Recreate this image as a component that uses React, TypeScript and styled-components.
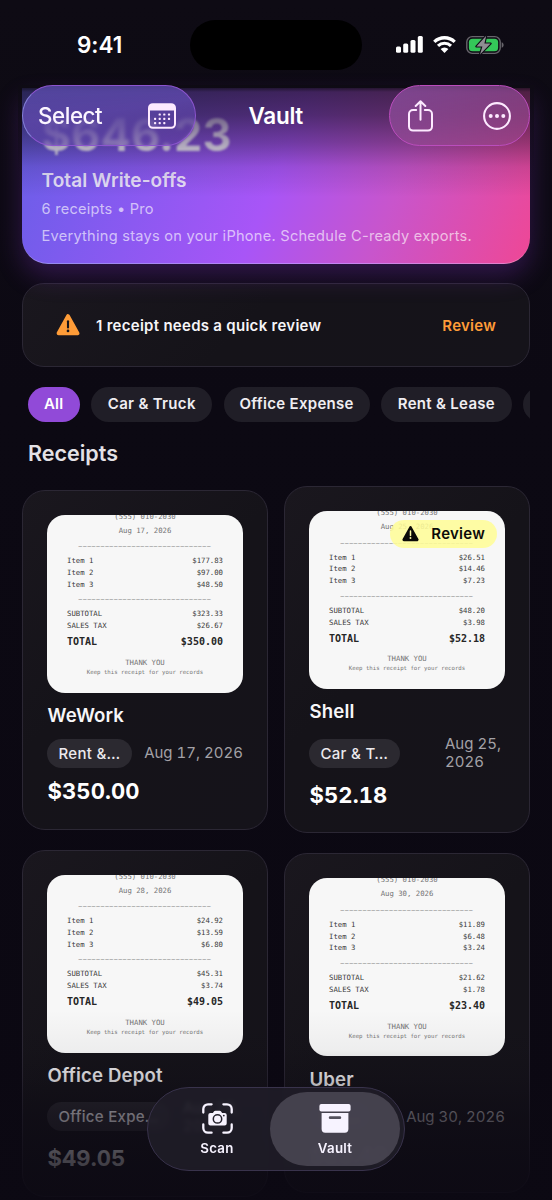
import React from "react";
import styled, { createGlobalStyle, css } from "styled-components";

const GlobalStyle = createGlobalStyle`
  * { box-sizing: border-box; }
  html, body { margin: 0; padding: 0; background: #0c0913; }
  body { font-family: Inter, "Liberation Sans", sans-serif; color: #fff; -webkit-font-smoothing: antialiased; }
`;

const Screen = styled.div`
  position: relative;
  width: 552px;
  height: 1200px;
  overflow: hidden;
  background: linear-gradient(180deg, #0e0b14 0, #0c0913 400px, #0b0812 100%);
`;

const StatusBar = styled.header`
  display: flex;
  align-items: center;
  height: 88px;
  padding: 1px 48px 0 77px;
`;

const Clock = styled.div`
  width: 113px;
  font-size: 22.5px;
  font-weight: 600;
  letter-spacing: -0.05px;
`;

const Island = styled.div`
  width: 172px;
  height: 50px;
  border-radius: 25px;
  background: #000;
`;

const StatusIcons = styled.div`
  display: flex;
  flex: 1;
  justify-content: flex-end;
  align-items: center;
  gap: 10px;
`;

const Content = styled.main`
  display: flex;
  flex-direction: column;
  padding: 0 22px;
`;

const Hero = styled.section`
  position: relative;
  display: flex;
  flex-direction: column;
  height: 176px;
  padding: 20px 19.5px 0;
  border-radius: 0 0 26px 26px;
  border-bottom: 1px solid rgba(255, 255, 255, 0.28);
  background: linear-gradient(112deg, #665fe6 0%, #7d5bee 18%, #a855f7 50%, #c855cc 72%, #ec4899 98%);
  box-shadow: 0 12px 26px rgba(125, 50, 190, 0.32);
`;

const Amount = styled.div`
  position: relative;
  z-index: 1;
  width: 220px;
  height: 54px;
  font-size: 45px;
  line-height: 54px;
  font-weight: 700;
  letter-spacing: 0.1px;
  color: transparent;
  background: linear-gradient(180deg, rgba(140, 132, 150, 0.7) 20%, rgba(190, 186, 196, 0.95) 78%);
  background-clip: text;
  -webkit-background-clip: text;
  filter: blur(1.3px);
`;

const TopShade = styled.div`
  position: absolute;
  left: -4px;
  right: -4px;
  top: -3px;
  height: 112px;
  background: linear-gradient(
    180deg,
    rgba(14, 11, 20, 1) 0,
    rgba(14, 11, 20, 0.68) 7px,
    rgba(14, 11, 20, 0.58) 30px,
    rgba(14, 11, 20, 0.36) 58px,
    rgba(14, 11, 20, 0.12) 82px,
    rgba(14, 11, 20, 0) 100%
  );
`;

const HeroTitle = styled.div`
  margin-top: 6px;
  font-size: 19px;
  line-height: 25px;
  font-weight: 600;
  letter-spacing: 0.08px;
  color: rgba(255, 255, 255, 0.84);
`;

const HeroLine = styled.div<{ $top: number }>`
  margin-top: ${(p) => p.$top}px;
  font-size: 14.6px;
  line-height: 20px;
  letter-spacing: 0.25px;
  color: rgba(255, 255, 255, 0.64);
  white-space: nowrap;
`;

const surface = css`
  border: 1px solid #2b2734;
  background: linear-gradient(135deg, #1a171e 0%, #151319 45%, #15131a 100%);
`;

const Banner = styled.section`
  ${surface}
  display: flex;
  align-items: center;
  height: 84px;
  margin-top: 19px;
  padding: 0 33px;
  border-radius: 22px;
`;

const BannerText = styled.div`
  flex: 1;
  margin-left: 16px;
  font-size: 15px;
  font-weight: 600;
  letter-spacing: 0.28px;
  color: #f6f5f8;
`;

const BannerAction = styled.div`
  font-size: 15px;
  font-weight: 600;
  letter-spacing: 0.25px;
  color: #ff9c38;
`;

const Chips = styled.nav`
  display: flex;
  gap: 11.3px;
  margin-top: 19.5px;
  padding-left: 5.5px;
  overflow: hidden;
`;

const Chip = styled.div<{ $width: number; $active?: boolean }>`
  flex: none;
  width: ${(p) => p.$width}px;
  height: 35px;
  border-radius: 18px;
  background: ${(p) => (p.$active ? "#914ad8" : "#201e27")};
  color: ${(p) => (p.$active ? "#fff" : "#efedf1")};
  font-size: 15px;
  line-height: 34px;
  font-weight: 600;
  letter-spacing: 0.3px;
  text-align: center;
  white-space: nowrap;
`;

const SectionTitle = styled.h2`
  margin: 16.5px 0 0 6px;
  font-size: 21.5px;
  line-height: 30px;
  font-weight: 600;
  letter-spacing: 0;
  color: #e4e2e6;
`;

const Grid = styled.section`
  display: grid;
  grid-template-columns: 246px 246px;
  column-gap: 16px;
  row-gap: 16.8px;
  align-items: center;
  margin-top: 18.2px;
`;

const Card = styled.article`
  ${surface}
  display: flex;
  flex-direction: column;
  gap: 11.3px;
  padding: 24px;
  border-radius: 23px;
`;

const Paper = styled.div`
  position: relative;
  display: flex;
  flex-direction: column;
  height: 178px;
  padding: 0 20px;
  border-radius: 18px;
  overflow: hidden;
  background: #f7f7f7;
  font-family: "DejaVu Sans Mono", "Liberation Mono", monospace;
  font-size: 7.3px;
  line-height: 11.7px;
  color: #3a3a3a;
`;

const PaperCenter = styled.div<{ $top: number; $size?: number }>`
  margin-top: ${(p) => p.$top}px;
  font-size: ${(p) => p.$size ?? 7.3}px;
  line-height: 10px;
  text-align: center;
  white-space: nowrap;
  color: #747474;
`;

const PaperRule = styled.div<{ $top: number }>`
  margin: ${(p) => p.$top}px 0 4px;
  font-size: 5.9px;
  line-height: 10px;
  letter-spacing: 0.88px;
  text-align: center;
  white-space: nowrap;
  color: #606060;
`;

const PaperRow = styled.div<{ $total?: boolean }>`
  display: flex;
  justify-content: space-between;
  ${(p) =>
    p.$total &&
    css`
      margin-top: 3.5px;
      font-size: 10px;
      line-height: 14px;
      font-weight: 700;
      color: #262626;
    `}
`;

const ReviewBadge = styled.div`
  position: absolute;
  top: 8.5px;
  right: 8px;
  display: flex;
  align-items: center;
  justify-content: space-between;
  width: 107px;
  height: 28.5px;
  padding: 0 12px;
  border-radius: 15px;
  background: rgba(255, 253, 150, 0.86);
  color: #0c0b08;
  font-family: Inter, sans-serif;
  font-size: 15px;
  font-weight: 600;
  letter-spacing: 0.25px;
`;

const Merchant = styled.div`
  padding-left: 0.5px;
  font-size: 18.6px;
  line-height: 23.5px;
  font-weight: 600;
  letter-spacing: 0.15px;
  color: #f7f6f8;
`;

const MetaRow = styled.div`
  display: flex;
  align-items: center;
  justify-content: space-between;
`;

const Category = styled.div`
  height: 29px;
  padding: 0 11.5px;
  border-radius: 15px;
  background: #2b2930;
  color: #eceaee;
  font-size: 15px;
  line-height: 29px;
  font-weight: 500;
  letter-spacing: 0.3px;
  white-space: nowrap;
`;

const DateText = styled.div<{ $wrap?: boolean }>`
  width: ${(p) => (p.$wrap ? "60px" : "auto")};
  font-size: 15px;
  line-height: 18px;
  letter-spacing: 0;
  font-variant-numeric: tabular-nums;
  color: #a3a1a6;
  white-space: ${(p) => (p.$wrap ? "normal" : "nowrap")};
`;

const Price = styled.div`
  padding-left: 0.5px;
  font-size: 22px;
  line-height: 25.5px;
  font-weight: 700;
  letter-spacing: 0.1px;
  font-variant-numeric: tabular-nums;
`;

const BottomShade = styled.div`
  position: absolute;
  left: 0;
  right: 0;
  bottom: 0;
  height: 190px;
  background: linear-gradient(
    180deg,
    rgba(12, 9, 19, 0) 0,
    rgba(12, 9, 19, 0.04) 40px,
    rgba(12, 9, 19, 0.18) 65px,
    rgba(12, 9, 19, 0.55) 105px,
    rgba(12, 9, 19, 0.76) 148px,
    rgba(12, 9, 19, 0.9) 100%
  );
`;

const NavBar = styled.nav`
  position: absolute;
  z-index: 2;
  left: 22px;
  right: 22px;
  top: 85px;
  display: grid;
  grid-template-columns: 174px 1fr 141px;
  align-items: center;
  height: 61px;
`;

const GlassGroup = styled.div<{ $side: "left" | "right" }>`
  display: flex;
  align-items: center;
  justify-content: space-between;
  height: 61px;
  border-radius: 31px;
  backdrop-filter: blur(1.6px);
  ${(p) =>
    p.$side === "left"
      ? css`
          padding: 0 19px 0 15px;
          border: 1px solid #8c55cf;
          border-left-color: #8580d8;
          background: linear-gradient(172deg, rgba(88, 75, 170, 0.86) 0%, rgba(95, 72, 172, 0.82) 45%, rgba(100, 66, 172, 0.42) 90%);
        `
      : css`
          padding: 0 18px 0 18px;
          border: 1px solid #bb4dbd;
          background: linear-gradient(160deg, rgba(135, 76, 155, 0.85), rgba(160, 70, 140, 0.6));
        `}
`;

const NavAction = styled.span`
  font-size: 22.3px;
  font-weight: 450;
  letter-spacing: -0.4px;
  color: #fbf5ff;
`;

const NavTitle = styled.h1`
  margin: 0 0 0 52.5px;
  font-size: 22.5px;
  font-weight: 600;
  letter-spacing: -0.3px;
`;

const TabBar = styled.nav`
  position: absolute;
  left: 147px;
  top: 1086.5px;
  display: flex;
  width: 258px;
  height: 84px;
  padding: 4px;
  border: 1px solid #39334c;
  border-radius: 42px;
  background: rgba(33, 30, 42, 0.82);
  backdrop-filter: blur(2px);
`;

const Tab = styled.div<{ $active?: boolean }>`
  display: flex;
  flex-direction: column;
  align-items: center;
  width: 130px;
  height: 74px;
  margin-left: ${(p) => (p.$active ? -12 : 0)}px;
  padding-top: 11px;
  border-radius: 37px;
  background: ${(p) => (p.$active ? "rgba(78, 75, 87, 0.82)" : "transparent")};
`;

const TabLabel = styled.span`
  margin-top: 5px;
  font-size: 13.3px;
  line-height: 18px;
  font-weight: 600;
  letter-spacing: 0.25px;
  color: #f7f3ff;
`;

const SignalIcon = () => (
  <svg width="27" height="17" viewBox="0 0 27 17" fill="#fff">
    <rect x="0" y="10.6" width="5" height="6.2" rx="1.5" />
    <rect x="7.2" y="7.6" width="5" height="9.2" rx="1.5" />
    <rect x="14.5" y="4" width="5" height="12.8" rx="1.5" />
    <rect x="21.8" y="0" width="5" height="16.8" rx="1.5" />
  </svg>
);

const WifiIcon = () => (
  <svg width="23" height="17" viewBox="0 0 23 17" fill="none" stroke="#fff">
    <path d="M1.3 5.9a14.6 14.6 0 0 1 20.4 0" strokeWidth="3.3" />
    <path d="M5 9.9a9.3 9.3 0 0 1 13 0" strokeWidth="3.1" />
    <path d="M11.5 16.9 7.6 13a5.6 5.6 0 0 1 7.8 0z" fill="#fff" stroke="none" />
  </svg>
);

const BatteryIcon = () => (
  <svg width="38" height="20" viewBox="0 0 38 20">
    <rect x="0.8" y="1.6" width="33.4" height="16.8" rx="5.4" fill="none" stroke="#67656b" strokeWidth="1.4" />
    <rect x="2.9" y="3.7" width="29.2" height="12.6" rx="3.6" fill="#34c759" />
    <path d="M35.7 7.3c1.5.6 1.9 1.6 1.9 2.7s-.4 2.1-1.9 2.7z" fill="#67656b" />
    <path
      d="M20.2.8 10.4 11.4h6l-2.4 8L24.6 8.6h-6.2z"
      fill="#8f8e93"
      stroke="#0e0b14"
      strokeWidth="2.2"
      strokeLinejoin="round"
      paintOrder="stroke"
    />
  </svg>
);

const CalendarIcon = () => {
  const dots = [
    [11.6, 11.4], [16.2, 11.4], [20.9, 11.4],
    [7, 15.8], [11.6, 15.8], [16.2, 15.8], [20.9, 15.8],
    [7, 20.1], [11.6, 20.1], [16.2, 20.1],
  ];
  return (
    <svg width="28" height="26" viewBox="0 0 28 26">
      <rect x="1" y="1.2" width="26" height="23.6" rx="3.8" fill="none" stroke="#fdeaff" strokeWidth="2" />
      <path d="M1 7.4V4.6A3.6 3.6 0 0 1 4.6 1h18.8A3.6 3.6 0 0 1 27 4.6v2.8z" fill="#fdeaff" />
      {dots.map(([x, y]) => (
        <rect key={`${x}-${y}`} x={x - 1} y={y - 1} width="2.2" height="2.2" rx="0.7" fill="#fdeaff" />
      ))}
    </svg>
  );
};

const ShareIcon = () => (
  <svg width="25" height="32" viewBox="0 0 25 32" fill="none" stroke="#fdeaff" strokeWidth="2" strokeLinecap="round" strokeLinejoin="round">
    <path d="M8.2 10H5a4 4 0 0 0-4 4v12.6a4 4 0 0 0 4 4h15a4 4 0 0 0 4-4V14a4 4 0 0 0-4-4h-3.2" />
    <path d="M12.5 19.8V1.4M7.7 6l4.8-4.8L17.3 6" />
  </svg>
);

const MoreIcon = () => (
  <svg width="28" height="28" viewBox="0 0 28 28">
    <circle cx="14" cy="14" r="12.9" fill="none" stroke="#fdeaff" strokeWidth="2.1" />
    <circle cx="7.7" cy="14" r="2" fill="#fdeaff" />
    <circle cx="14" cy="14" r="2" fill="#fdeaff" />
    <circle cx="20.3" cy="14" r="2" fill="#fdeaff" />
  </svg>
);

const WarningIcon = ({ width, color, mark }: { width: number; color: string; mark: string }) => (
  <svg width={width} height={(width * 21) / 23} viewBox="0 0 23 21">
    <path
      d="M11.5 2.2 21 18.8H2z"
      fill={color}
      stroke={color}
      strokeWidth="4"
      strokeLinejoin="round"
      transform="translate(0.58 0) scale(.95 .985)"
    />
    <path d="M11.5 6.9v6" stroke={mark} strokeWidth="2" strokeLinecap="round" />
    <circle cx="11.5" cy="16.2" r="1.3" fill={mark} />
  </svg>
);

const ScanIcon = () => (
  <svg width="31" height="31" viewBox="0 0 31 31">
    <path
      d="M1.3 9.5V6a4.7 4.7 0 0 1 4.7-4.7h3.6M21.4 1.3H25A4.7 4.7 0 0 1 29.7 6v3.5M29.7 21.5V25a4.7 4.7 0 0 1-4.7 4.7h-3.6M9.6 29.7H6A4.7 4.7 0 0 1 1.3 25v-3.5"
      fill="none"
      stroke="#f7f3ff"
      strokeWidth="2.3"
      strokeLinecap="round"
    />
    <path
      d="M8.4 10h2.5l1.2-1.7c.3-.4.7-.6 1.2-.6h4.4c.5 0 .9.2 1.2.6l1.2 1.7h2.5a2.1 2.1 0 0 1 2.1 2.1v8.4a2.1 2.1 0 0 1-2.1 2.1H8.4a2.1 2.1 0 0 1-2.1-2.1v-8.4A2.1 2.1 0 0 1 8.4 10z"
      fill="#f7f3ff"
    />
    <circle cx="15.5" cy="15.9" r="4.2" fill="none" stroke="#25222d" strokeWidth="1.5" />
    <circle cx="21.8" cy="12.6" r="0.9" fill="#25222d" />
  </svg>
);

const VaultIcon = () => (
  <svg width="32" height="31" viewBox="0 0 32 31" fill="#f7f3ff">
    <rect x="0.4" y="1" width="31.2" height="7.4" rx="2" />
    <path d="M2.6 10.1h26.8v16a3.6 3.6 0 0 1-3.6 3.6H6.2a3.6 3.6 0 0 1-3.6-3.6z" />
    <rect x="9.8" y="13.3" width="12.4" height="2.7" rx="1.3" fill="#54515d" />
  </svg>
);

type Receipt = {
  merchant: string;
  category: string;
  date: string;
  wrap?: boolean;
  review?: boolean;
  items: string[];
  subtotal: string;
  tax: string;
  total: string;
};

const receipts: Receipt[] = [
  { merchant: "WeWork", category: "Rent &…", date: "Aug 17, 2026", items: ["$177.83", "$97.00", "$48.50"], subtotal: "$323.33", tax: "$26.67", total: "$350.00" },
  { merchant: "Shell", category: "Car & T…", date: "Aug 25, 2026", wrap: true, review: true, items: ["$26.51", "$14.46", "$7.23"], subtotal: "$48.20", tax: "$3.98", total: "$52.18" },
  { merchant: "Office Depot", category: "Office Expe…", date: "Aug 28, 2026", wrap: true, items: ["$24.92", "$13.59", "$6.80"], subtotal: "$45.31", tax: "$3.74", total: "$49.05" },
  { merchant: "Uber", category: "Car…", date: "Aug 30, 2026", items: ["$11.89", "$6.48", "$3.24"], subtotal: "$21.62", tax: "$1.78", total: "$23.40" },
];

const chips = [
  { label: "All", width: 52.5 },
  { label: "Car & Truck", width: 121 },
  { label: "Office Expense", width: 146 },
  { label: "Rent & Lease", width: 131 },
  { label: "", width: 120 },
];

const rule = "–".repeat(30);

const ReceiptCard = ({ r }: { r: Receipt }) => (
  <Card>
    <Paper>
      <PaperCenter $top={-3}>(555) 010-2030</PaperCenter>
      <PaperCenter $top={4}>{r.date}</PaperCenter>
      <PaperRule $top={5.5}>{rule}</PaperRule>
      {r.items.map((price, i) => (
        <PaperRow key={i}>
          <span>Item {i + 1}</span>
          <span>{price}</span>
        </PaperRow>
      ))}
      <PaperRule $top={4}>{rule}</PaperRule>
      <PaperRow>
        <span>SUBTOTAL</span>
        <span>{r.subtotal}</span>
      </PaperRow>
      <PaperRow>
        <span>SALES TAX</span>
        <span>{r.tax}</span>
      </PaperRow>
      <PaperRow $total>
        <span>TOTAL</span>
        <span>{r.total}</span>
      </PaperRow>
      <PaperCenter $top={8.7}>THANK YOU</PaperCenter>
      <PaperCenter $top={-1} $size={5.7}>Keep this receipt for your records</PaperCenter>
      {r.review && (
        <ReviewBadge>
          <WarningIcon width={17} color="#0c0b08" mark="#fffda8" />
          Review
        </ReviewBadge>
      )}
    </Paper>
    <Merchant>{r.merchant}</Merchant>
    <MetaRow>
      <Category>{r.category}</Category>
      <DateText $wrap={r.wrap}>{r.date}</DateText>
    </MetaRow>
    <Price>{r.total}</Price>
  </Card>
);

export default function App() {
  return (
    <Screen>
      <GlobalStyle />
      <StatusBar>
        <Clock>9:41</Clock>
        <Island />
        <StatusIcons>
          <SignalIcon />
          <WifiIcon />
          <BatteryIcon />
        </StatusIcons>
      </StatusBar>
      <Content>
        <Hero>
          <Amount>$646.23</Amount>
          <TopShade />
          <HeroTitle>Total Write-offs</HeroTitle>
          <HeroLine $top={6}>6 receipts • Pro</HeroLine>
          <HeroLine $top={7}>Everything stays on your iPhone. Schedule C-ready exports.</HeroLine>
        </Hero>
        <Banner>
          <WarningIcon width={24} color="#ff9c38" mark="#17151c" />
          <BannerText>1 receipt needs a quick review</BannerText>
          <BannerAction>Review</BannerAction>
        </Banner>
        <Chips>
          {chips.map((c, i) => (
            <Chip key={i} $width={c.width} $active={i === 0}>{c.label}</Chip>
          ))}
        </Chips>
        <SectionTitle>Receipts</SectionTitle>
        <Grid>
          {receipts.map((r) => (
            <ReceiptCard key={r.merchant} r={r} />
          ))}
        </Grid>
      </Content>
      <BottomShade />
      <NavBar>
        <GlassGroup $side="left">
          <NavAction>Select</NavAction>
          <CalendarIcon />
        </GlassGroup>
        <NavTitle>Vault</NavTitle>
        <GlassGroup $side="right">
          <ShareIcon />
          <MoreIcon />
        </GlassGroup>
      </NavBar>
      <TabBar>
        <Tab>
          <ScanIcon />
          <TabLabel>Scan</TabLabel>
        </Tab>
        <Tab $active>
          <VaultIcon />
          <TabLabel>Vault</TabLabel>
        </Tab>
      </TabBar>
    </Screen>
  );
}
